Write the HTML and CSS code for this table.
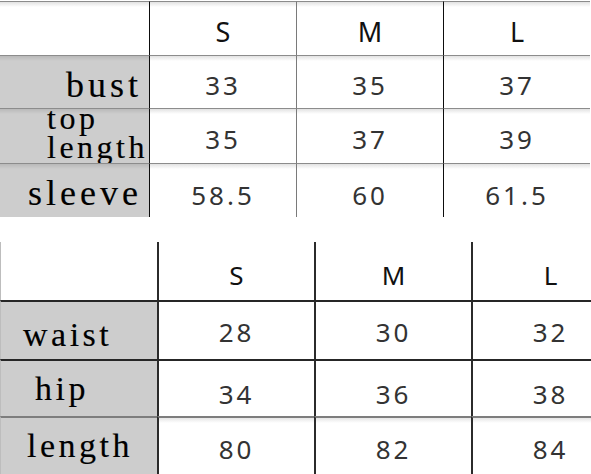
FILE: index.html
```html
<!DOCTYPE html>
<html lang="en">
<head>
<meta charset="utf-8">
<title>Size chart</title>
<link rel="stylesheet" href="styles.css">
</head>
<body>
<div class="sheet">
  <div class="chart chart-top">
    <div class="cell corner"></div>
    <div class="cell head col-b">S</div>
    <div class="cell head col-c">M</div>
    <div class="cell head col-d">L</div>

    <div class="cell label row-2">bust</div>
    <div class="cell num row-2 col-b">33</div>
    <div class="cell num row-2 col-c">35</div>
    <div class="cell num row-2 col-d">37</div>

    <div class="cell label label-stack row-3"><span class="stack"><span class="stack-line">top</span><span class="stack-line">length</span></span></div>
    <div class="cell num row-3 col-b">35</div>
    <div class="cell num row-3 col-c">37</div>
    <div class="cell num row-3 col-d">39</div>

    <div class="cell label row-4">sleeve</div>
    <div class="cell num row-4 col-b">58.5</div>
    <div class="cell num row-4 col-c">60</div>
    <div class="cell num row-4 col-d">61.5</div>
  </div>

  <div class="chart chart-bottom">
    <div class="cell corner"></div>
    <div class="cell head">S</div>
    <div class="cell head">M</div>
    <div class="cell head">L</div>

    <div class="cell label row-2 pad-waist">waist</div>
    <div class="cell num row-2">28</div>
    <div class="cell num row-2">30</div>
    <div class="cell num row-2">32</div>

    <div class="cell label row-3 pad-hip">hip</div>
    <div class="cell num row-3">34</div>
    <div class="cell num row-3">36</div>
    <div class="cell num row-3">38</div>

    <div class="cell label row-4 pad-length">length</div>
    <div class="cell num row-4">80</div>
    <div class="cell num row-4">82</div>
    <div class="cell num row-4">84</div>
  </div>
</div>
</body>
</html>
```

FILE: styles.css
```css
html, body {
  margin: 0;
  padding: 0;
  background: #ffffff;
}

body {
  width: 591px;
  height: 474px;
  overflow: hidden;
}

.sheet {
  display: flex;
  flex-direction: column;
}

.chart {
  display: grid;
}

.cell {
  box-sizing: border-box;
  display: flex;
  align-items: center;
  justify-content: center;
  overflow: visible;
}

.head {
  font-family: "Noto Sans", "Open Sans", sans-serif;
  color: #111111;
}

.num {
  font-family: "Noto Sans", "Open Sans", sans-serif;
  color: #333333;
  letter-spacing: 3px;
}

.label {
  font-family: "Liberation Serif", "Times New Roman", serif;
  color: #000000;
  background-color: #cdcdcd;
  -webkit-text-stroke: 0.15px #000000;
}

/* ---------- top chart ---------- */
.chart-top {
  grid-template-columns: 149px 147px 147px 147px;
  grid-template-rows: 54px 53px 55px 54px;
  padding-top: 1px;
}

.chart-top .cell {
  border-top: 1px solid #8c8c8c;
}

.chart-top .num,
.chart-top .head,
.chart-top .corner {
  background-image: linear-gradient(#e2e2e2, #ffffff 5px);
}

.chart-top .label {
  background-image: linear-gradient(#b9b9b9, #cdcdcd 5px);
}

.chart-top .col-b {
  border-left: 1px solid #0d0d0d;
}

.chart-top .col-c {
  border-left: 1px solid #7a7a7a;
}

.chart-top .col-d {
  border-left: 1px solid #0d0d0d;
}

.chart-top .head {
  font-size: 27px;
  padding-top: 5px;
}

.chart-top .num {
  font-size: 26px;
}

.chart-top .num.row-2 { padding-top: 5px; }
.chart-top .num.row-3 { padding-top: 6px; }
.chart-top .num.row-4 { padding-top: 8px; }

.chart-top .label {
  justify-content: flex-end;
  font-size: 36px;
  letter-spacing: 4px;
  padding-right: 7px;
  padding-top: 5px;
}

.chart-top .label-stack {
  align-items: flex-start;
  padding-top: 0;
  padding-right: 1px;
}

.stack {
  display: flex;
  flex-direction: column;
  align-items: flex-start;
  font-size: 32px;
  line-height: 29px;
  letter-spacing: 3.5px;
  margin-top: -5px;
}

.stack-line {
  display: block;
}

/* ---------- bottom chart ---------- */
.chart-bottom {
  margin-top: 25px;
  width: 628px;
  grid-template-columns: 157px 157px 157px 157px;
  grid-template-rows: 58px 59px 57px 58px;
}

.chart-bottom .cell {
  border-left: 2px solid #2b2b2b;
}

.chart-bottom .cell:nth-child(4n+1) {
  border-left: 1px solid #bdbdbd;
}

.chart-bottom .row-2,
.chart-bottom .row-3 {
  border-top: 2px solid #262626;
}

.chart-bottom .row-4 {
  border-top: 2px solid #7d7d7d;
}

.chart-bottom .num.row-4 {
  background-image: linear-gradient(#e6e6e6, #ffffff 5px);
}

.chart-bottom .head {
  font-size: 26px;
  padding-top: 8px;
}

.chart-bottom .num {
  font-size: 26px;
}

.chart-bottom .num.row-2 { padding-top: 2px; }
.chart-bottom .num.row-3 { padding-top: 10px; }
.chart-bottom .num.row-4 { padding-top: 6px; }

.chart-bottom .label {
  justify-content: flex-start;
  font-size: 34px;
  letter-spacing: 3.5px;
}

.chart-bottom .pad-waist {
  padding-left: 22px;
  padding-top: 8px;
}

.chart-bottom .pad-hip {
  padding-left: 34px;
}

.chart-bottom .pad-length {
  padding-left: 26px;
}
```
